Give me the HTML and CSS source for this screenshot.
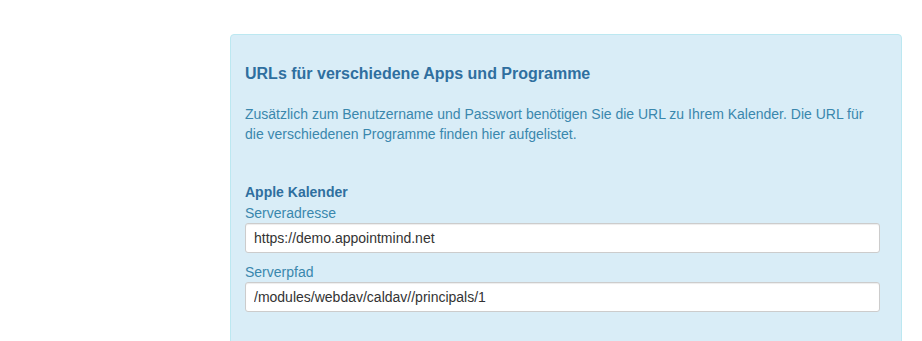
FILE: index.html
```html
<!DOCTYPE html>
<html lang="de">
<head>
  <meta charset="UTF-8">
  <meta name="viewport" content="width=device-width, initial-scale=1.0">
  <title>Kalender URLs</title>
  <link rel="stylesheet" href="styles.css">
</head>
<body>
  <main class="page">
    <section class="alert-info">
      <h3>URLs für verschiedene Apps und Programme</h3>
      <p>Zusätzlich zum Benutzername und Passwort benötigen Sie die URL zu Ihrem Kalender. Die URL für die verschiedenen Programme finden hier aufgelistet.</p>
      <div class="app">
        <h4>Apple Kalender</h4>
        <label class="field">
          <span>Serveradresse</span>
          <input type="text" value="https://demo.appointmind.net" readonly>
        </label>
        <label class="field">
          <span>Serverpfad</span>
          <input type="text" value="/modules/webdav/caldav//principals/1" readonly>
        </label>
      </div>
    </section>
  </main>
</body>
</html>
```

FILE: styles.css
```css
* { box-sizing: border-box; }

html, body {
  margin: 0;
  background: #fff;
  font-family: "Liberation Sans", Arial, sans-serif;
  font-size: 14px;
  line-height: 20px;
}

.page {
  padding: 34px 20px 0 230px;
}

.alert-info {
  background: #d9edf7;
  border: 1px solid #bce8f1;
  border-radius: 4px;
  padding: 25px 21px 40px 14px;
  color: #3a87ad;
}

h3 {
  margin: 0 0 16px;
  font-size: 16px;
  line-height: 28px;
  color: #2f6f9f;
}

p {
  margin: 0 0 38px;
  line-height: 20px;
}

h4 {
  margin: 0;
  font-size: 14px;
  line-height: 20px;
  color: #2f6f9f;
}

.field {
  display: flex;
  flex-direction: column;
  margin: 1px 0 9px;
}

.field span {
  line-height: 20px;
}

.field input {
  height: 30px;
  padding: 4px 8px;
  border: 1px solid #ccc;
  border-radius: 3px;
  background: #fff;
  color: #333;
  font-family: inherit;
  font-size: 14px;
  box-shadow: inset 0 1px 1px rgba(0, 0, 0, 0.075);
}
```
